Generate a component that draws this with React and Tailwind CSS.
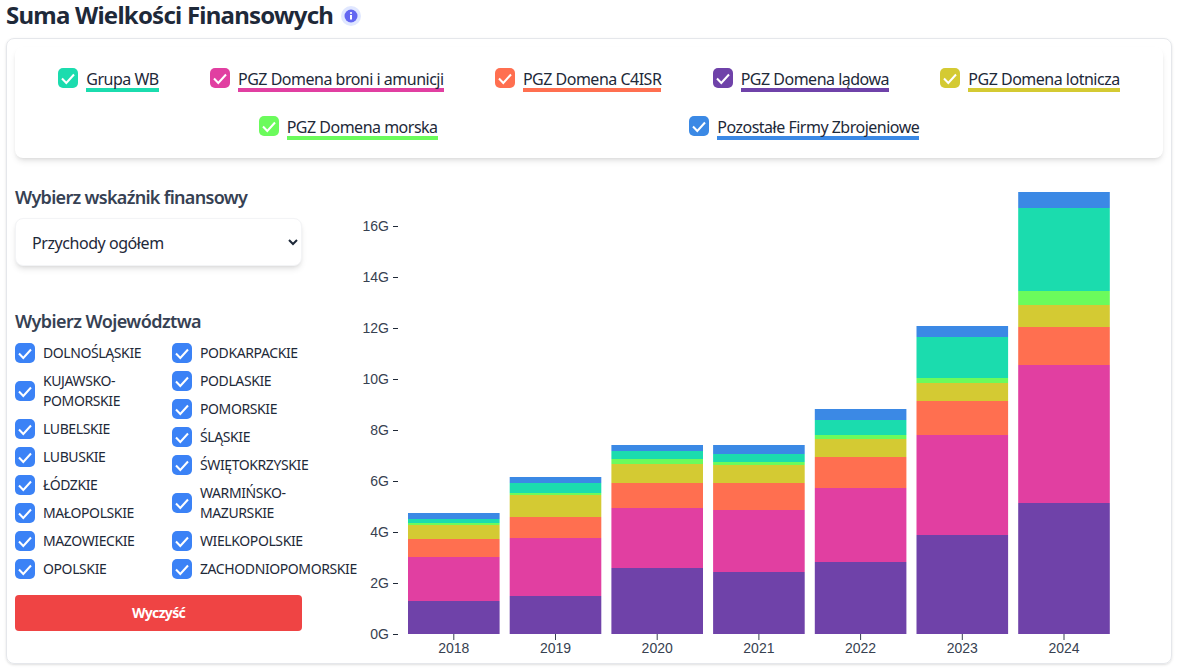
import React from "react";

const COLORS = {
  purple: "#6f42a9",
  pink: "#e13fa1",
  orange: "#ff6f50",
  yellow: "#d4ca33",
  green: "#6bfb5c",
  teal: "#1bdcae",
  blue: "#3b89e5",
};

const LEGEND = [
  { label: "Grupa WB", box: "bg-[#1bdcae]", line: "border-[#1bdcae]" },
  { label: "PGZ Domena broni i amunicji", box: "bg-[#e13fa1]", line: "border-[#e13fa1]" },
  { label: "PGZ Domena C4ISR", box: "bg-[#ff6f50]", line: "border-[#ff6f50]" },
  { label: "PGZ Domena lądowa", box: "bg-[#6f42a9]", line: "border-[#6f42a9]" },
  { label: "PGZ Domena lotnicza", box: "bg-[#d4ca33]", line: "border-[#d4ca33]" },
  { label: "PGZ Domena morska", box: "bg-[#6bfb5c]", line: "border-[#6bfb5c]" },
  { label: "Pozostałe Firmy Zbrojeniowe", box: "bg-[#3b89e5]", line: "border-[#3b89e5]" },
];

const COL_A = ["Dolnośląskie", "Kujawsko-Pomorskie", "Lubelskie", "Lubuskie", "Łódzkie", "Małopolskie", "Mazowieckie", "Opolskie"];
const COL_B = ["Podkarpackie", "Podlaskie", "Pomorskie", "Śląskie", "Świętokrzyskie", "Warmińsko-Mazurskie", "Wielkopolskie", "Zachodniopomorskie"];

// segment heights in px, bottom to top
const BARS = [
  { year: 2018, seg: [33, 44, 18, 14, 2, 4, 6] },
  { year: 2019, seg: [38, 58, 21, 22, 2, 10, 6] },
  { year: 2020, seg: [66, 60, 25, 19, 5, 8, 6] },
  { year: 2021, seg: [62, 62, 27, 18, 3, 8, 9] },
  { year: 2022, seg: [72, 74, 31, 18, 4, 15, 11] },
  { year: 2023, seg: [99, 100, 34, 18, 5, 41, 11] },
  { year: 2024, seg: [131, 138, 38, 22, 14, 83, 16] },
];
const SEG_COLORS = [COLORS.purple, COLORS.pink, COLORS.orange, COLORS.yellow, COLORS.green, COLORS.teal, COLORS.blue];
const TICKS = [0, 2, 4, 6, 8, 10, 12, 14, 16];

const Check = ({ className }) => (
  <span className={`flex h-5 w-5 shrink-0 items-center justify-center rounded-[5px] ${className}`}>
    <svg width="20" height="20" viewBox="0 0 20 20" fill="none">
      <path d="M4 10.5l4.3 4.5L16 6.5" stroke="#fff" strokeWidth="2" />
    </svg>
  </span>
);

const Chart = () => {
  const base = 464;
  return (
    <svg width="820" height="490" viewBox="0 0 820 490" className="shrink-0">
      {TICKS.map((t) => {
        const y = Math.round(base - t * 25.5);
        return (
          <g key={t}>
            <line x1="53" x2="58" y1={y + 0.5} y2={y + 0.5} stroke="#1f2937" />
            <text x="49" y={y + 5} textAnchor="end" fontSize="14" fill="#374151" fontFamily="Liberation Sans, sans-serif">
              {t}G
            </text>
          </g>
        );
      })}
      {BARS.map((bar, i) => {
        const x = 68 + i * 101.7;
        let top = base;
        return (
          <g key={bar.year}>
            {bar.seg.map((h, j) => {
              top -= h;
              return <rect key={j} x={x} y={top} width="91.6" height={h} fill={SEG_COLORS[j]} />;
            })}
            <line x1={x + 45.8} x2={x + 45.8} y1={base} y2={base + 6} stroke="#374151" />
            <text x={x + 45.8} y={base + 19} textAnchor="middle" fontSize="14" fill="#374151" fontFamily="Liberation Sans, sans-serif">
              {bar.year}
            </text>
          </g>
        );
      })}
    </svg>
  );
};

const Region = ({ name }) => (
  <label className="flex items-center gap-2">
    <Check className="bg-[#3b82f6]" />
    <span className="text-sm leading-5 tracking-[-0.4px] uppercase text-gray-800">{name}</span>
  </label>
);

export default function App() {
  return (
    <div className="h-[670px] overflow-hidden bg-white pl-[6px] pr-[7px] font-['Noto_Sans',sans-serif]">
      <div className="flex h-[30px] items-center gap-2">
        <h1 className="text-2xl leading-[30px] font-bold tracking-[-0.77px] text-gray-800">Suma Wielkości Finansowych</h1>
        <svg width="20" height="20" viewBox="0 0 20 20" className="mt-[2px]">
          <circle cx="10" cy="10" r="10" fill="#e0e7ff" />
          <circle cx="10" cy="10" r="6.5" fill="#6366f1" />
          <circle cx="10" cy="7" r="1.1" fill="#fff" />
          <rect x="9" y="9" width="2" height="4.5" fill="#fff" />
        </svg>
      </div>

      <div className="mt-2 h-[626px] rounded-lg border border-gray-200 p-2 shadow">
        {/* legenda */}
        <div className="flex flex-wrap justify-evenly gap-x-4 gap-y-[22px] rounded-lg bg-white px-4 pt-[19px] pb-[18px] shadow-md">
          {LEGEND.map((item) => (
            <div key={item.label} className="mx-2 flex h-[26px] items-start gap-2">
              <span className="mt-[2px]">
                <Check className={item.box} />
              </span>
              <span className={`h-[26px] border-b-4 pt-px leading-6 tracking-[-0.5px] text-gray-800 ${item.line}`}>{item.label}</span>
            </div>
          ))}
        </div>

        <div className="flex">
          <div className="w-[287px] shrink-0">
            <h2 className="mt-[25px] text-lg font-semibold tracking-[-0.7px] text-gray-700">Wybierz wskaźnik finansowy</h2>
            <select className="mt-[7px] h-12 w-full rounded-lg border border-gray-100 bg-white pt-[2px] pl-3 pr-1 tracking-[-0.44px] text-gray-800 shadow-md">
              <option>Przychody ogółem</option>
            </select>
            <h2 className="mt-[41px] text-lg font-semibold tracking-[-0.58px] text-gray-700">Wybierz Województwa</h2>
            <div className="mt-2 flex gap-[27px]">
              <div className="flex w-[130px] flex-col gap-2">
                {COL_A.map((n) => (
                  <Region key={n} name={n} />
                ))}
              </div>
              <div className="flex w-[130px] flex-col gap-2">
                {COL_B.map((n) => (
                  <Region key={n} name={n} />
                ))}
              </div>
            </div>
            <button className="mt-4 h-9 w-full rounded bg-[#ef4444] text-sm font-bold tracking-[-0.7px] text-white">Wyczyść</button>
          </div>
          <div className="ml-[38px] mt-3">
            <Chart />
          </div>
        </div>
      </div>
    </div>
  );
}
